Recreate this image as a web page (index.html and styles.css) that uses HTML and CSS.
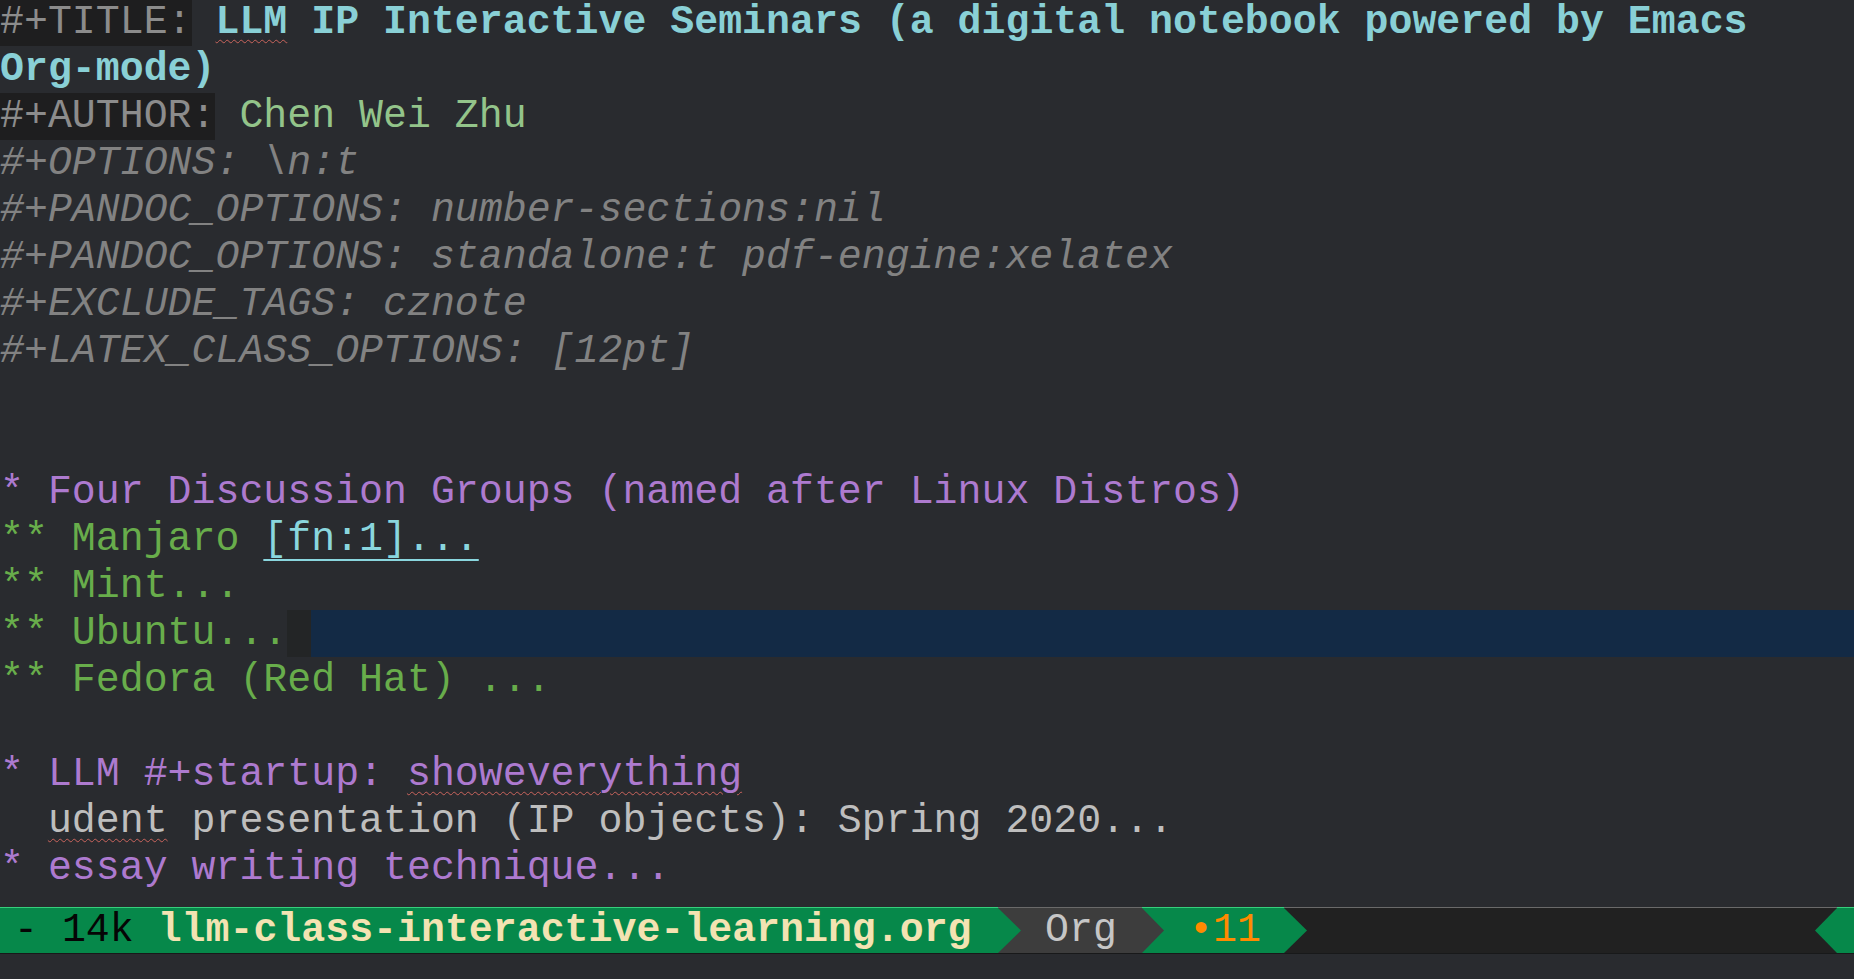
FILE: index.html
```html
<!DOCTYPE html>
<html>
<head>
<meta charset="utf-8">
<title>llm-class-interactive-learning.org</title>
<link rel="stylesheet" href="styles.css">
</head>
<body>
<div class="frame">
  <div class="buffer">
    <div class="line"><span class="kw-box">#+TITLE:</span> <span class="title"><span class="spell">LLM</span> IP Interactive Seminars (a digital notebook powered by Emacs</span></div>
    <div class="line"><span class="title">Org-mode)</span></div>
    <div class="line"><span class="kw-box">#+AUTHOR:</span> <span class="author">Chen Wei Zhu</span></div>
    <div class="line meta">#+OPTIONS: \n:t</div>
    <div class="line meta">#+PANDOC_OPTIONS: number-sections:nil</div>
    <div class="line meta">#+PANDOC_OPTIONS: standalone:t pdf-engine:xelatex</div>
    <div class="line meta">#+EXCLUDE_TAGS: cznote</div>
    <div class="line meta">#+LATEX_CLASS_OPTIONS: [12pt]</div>
    <div class="line"> </div>
    <div class="line"> </div>
    <div class="line h1">* Four Discussion Groups (named after Linux Distros)</div>
    <div class="line h2">** Manjaro <span class="fn">[fn:1]...</span></div>
    <div class="line h2">** Mint...</div>
    <div class="line h2 cur-line"><span>** Ubuntu...</span><span class="cursor"> </span><span class="hl"></span></div>
    <div class="line h2">** Fedora (Red Hat) ...</div>
    <div class="line"> </div>
    <div class="line h1">* LLM #+startup: <span class="spell">showeverything</span></div>
    <div class="line plain">  <span class="spell">udent</span> presentation (IP objects): Spring 2020...</div>
    <div class="line h1">* essay writing technique...</div>
  </div>
  <div class="modeline">
    <div class="seg seg-green seg-main"><span class="ml-dim">- 14k</span> <span class="ml-file">llm-class-interactive-learning.org</span></div>
    <div class="arrow arrow-on-dark"><svg width="23" height="45" viewBox="0 0 23 45"><polygon points="0,0 23,22.5 0,45" fill="#06884a"/></svg></div>
    <div class="seg seg-dark seg-mode">Org</div>
    <div class="arrow arrow-on-green"><svg width="22" height="45" viewBox="0 0 22 45"><polygon points="0,0 22,22.5 0,45" fill="#3d3d3d"/></svg></div>
    <div class="seg seg-green seg-count">•11</div>
    <div class="arrow arrow-on-black"><svg width="23" height="45" viewBox="0 0 23 45"><polygon points="0,0 23,22.5 0,45" fill="#06884a"/></svg></div>
    <div class="seg seg-black seg-fill"></div>
    <div class="arrow arrow-on-black"><svg width="22" height="45" viewBox="0 0 22 45"><polygon points="22,0 0,22.5 22,45" fill="#06884a"/></svg></div>
    <div class="seg seg-green seg-end"></div>
  </div>
  <div class="echo"></div>
</div>
</body>
</html>
```
FILE: styles.css
```css
html, body {
  margin: 0;
  padding: 0;
  background: #292b2f;
  overflow: hidden;
}

.frame {
  width: 1854px;
  height: 979px;
  display: flex;
  flex-direction: column;
  font-family: "Liberation Mono", "DejaVu Sans Mono", monospace;
  font-size: 39.9px;
}

.buffer {
  height: 907px;
  overflow: hidden;
  display: flex;
  flex-direction: column;
}

.line {
  height: 47px;
  line-height: 47px;
  white-space: pre;
  color: #bdbdbd;
  flex: none;
}

.line:first-child {
  margin-top: -1px;
}

.kw-box {
  background: #1e1e1f;
  color: #8c8c8c;
  display: inline-block;
  height: 47px;
}

.title {
  color: #89d0d6;
  font-weight: bold;
}

.author {
  color: #93c48a;
}

.meta {
  color: #828282;
  font-style: italic;
}

.h1 {
  color: #ad7acf;
}

.h2 {
  color: #68ad4b;
}

.fn {
  color: #8ad6de;
  text-decoration: underline;
  text-decoration-color: #8ad6de;
  text-underline-offset: 9px;
  text-decoration-thickness: 1.5px;
}

.spell {
  text-decoration: underline wavy #c9645c;
  text-decoration-thickness: 1px;
  text-underline-offset: 6px;
}

.plain {
  color: #bebebe;
}

.cur-line {
  display: flex;
}

.cursor {
  display: inline-block;
  width: 23.94px;
  height: 47px;
  background: #232526;
}

.hl {
  flex: 1;
  height: 47px;
  background: #132a45;
}

/* mode line */
.modeline {
  height: 47px;
  display: flex;
  flex: none;
  line-height: 45px;
}

.seg, .arrow {
  box-sizing: border-box;
  height: 47px;
  border-top: 1px solid #6a6a6a;
  border-bottom: 1px solid #18191a;
  white-space: pre;
  flex: none;
}

.arrow svg {
  display: block;
}

.seg-green {
  background: #06884a;
  border-top-color: #36cf7c;
}

.seg-dark {
  background: #3d3d3d;
}

.seg-black {
  background: #212121;
}

.seg-main {
  width: 998px;
  padding-left: 14px;
}

.ml-dim {
  color: #050505;
}

.ml-file {
  color: #f3e3b2;
  font-weight: bold;
}

.arrow-on-dark {
  width: 23px;
  background: #3d3d3d;
}

.arrow-on-green {
  width: 22px;
  background: #06884a;
  border-top-color: #36cf7c;
}

.arrow-on-black {
  background: #212121;
}

.seg-mode {
  width: 121px;
  padding-left: 24px;
  color: #c6c6c6;
}

.seg-count {
  width: 120px;
  padding-left: 25px;
  color: #ff8a00;
}

.seg-fill {
  flex: 1;
}

.seg-end {
  width: 17px;
}

.echo {
  flex: 1;
  background: #292b2f;
}
```
